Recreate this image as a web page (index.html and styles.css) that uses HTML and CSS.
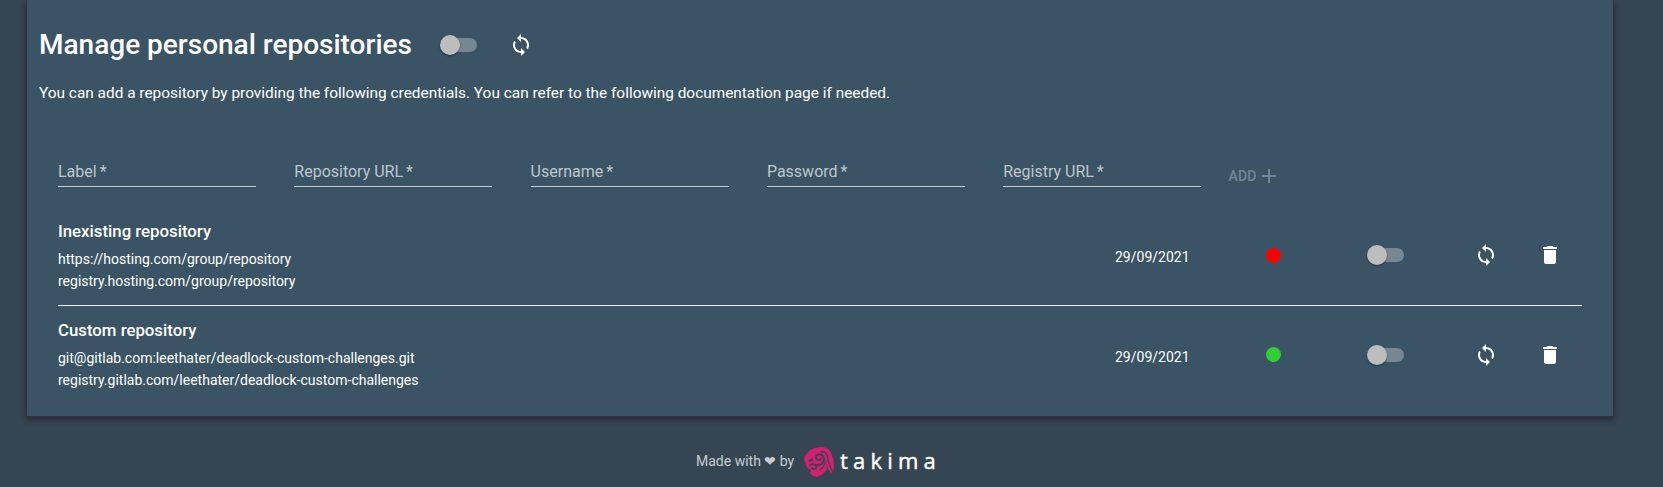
FILE: index.html
```html
<!DOCTYPE html>
<html lang="en">
<head>
<meta charset="utf-8">
<title>Manage personal repositories</title>
<link rel="stylesheet" href="styles.css">
</head>
<body>
<svg class="defs" width="0" height="0">
  <symbol id="sync" viewBox="0 0 24 24"><path d="M12 4V1L8 5l4 4V6c3.31 0 6 2.69 6 6 0 1.01-.25 1.97-.7 2.8l1.46 1.46C19.54 15.03 20 13.57 20 12c0-4.42-3.58-8-8-8zm0 14c-3.31 0-6-2.69-6-6 0-1.01.25-1.97.7-2.8L5.24 7.74C4.46 8.97 4 10.43 4 12c0 4.42 3.58 8 8 8v3l4-4-4-4v3z"/></symbol>
  <symbol id="trash" viewBox="0 0 24 24"><path d="M6 19c0 1.100.9 2 2 2h8c1.100 0 2-.9 2-2V7H6v12zM19 4h-3.500l-1-1h-5l-1 1H5v2h14V4z"/></symbol>
  <symbol id="plus" viewBox="0 0 24 24"><path d="M19 13h-6v6h-2v-6H5v-2h6V5h2v6h6v2z"/></symbol>
</svg>
<main class="card">
  <header class="heading">
    <h1 class="title">Manage personal repositories</h1>
    <span class="toggle"></span>
    <svg class="icon"><use href="#sync"/></svg>
  </header>
  <p class="intro">You can add a repository by providing the following credentials. You can refer to the following documentation page if needed.</p>
  <form class="form">
    <label class="field">Label<span class="star">*</span></label>
    <label class="field">Repository URL<span class="star">*</span></label>
    <label class="field">Username<span class="star">*</span></label>
    <label class="field">Password<span class="star">*</span></label>
    <label class="field">Registry URL<span class="star">*</span></label>
    <div class="add"><span class="add-text">ADD</span><svg class="add-icon"><use href="#plus"/></svg></div>
  </form>
  <section class="list">
    <article class="row">
      <div class="info">
        <h2 class="name">Inexisting repository</h2>
        <div class="url">https://hosting.com/group/repository</div>
        <div class="url">registry.hosting.com/group/repository</div>
      </div>
      <time class="date">29/09/2021</time>
      <span class="dot dot-red"></span>
      <span class="toggle"></span>
      <svg class="icon"><use href="#sync"/></svg>
      <svg class="icon"><use href="#trash"/></svg>
    </article>
    <article class="row">
      <div class="info">
        <h2 class="name">Custom repository</h2>
        <div class="url">git@gitlab.com:leethater/deadlock-custom-challenges.git</div>
        <div class="url">registry.gitlab.com/leethater/deadlock-custom-challenges</div>
      </div>
      <time class="date">29/09/2021</time>
      <span class="dot dot-green"></span>
      <span class="toggle"></span>
      <svg class="icon"><use href="#sync"/></svg>
      <svg class="icon"><use href="#trash"/></svg>
    </article>
  </section>
</main>
<footer class="footer">
  <span class="made">Made with ❤ by</span>
  <svg class="logo" viewBox="0 0 30 30">
    <path fill="#d61f72" d="M1 9C5 3 10 0 17 0c5 0 8 2 10 6 2 4 3 9 3 15l-2 5c-2-1-3-3-4-4l-2 1c-1 3-5 5-9 7-3-1-6-2-7-4l1-3c-2-1-4-2-5-5C0 15 0 11 1 9z"/>
    <path fill="#364652" d="M9 8l-1 4 2 2-5 1-1-2 3-1z"/>
    <g fill="none" stroke="#364652" stroke-linecap="round">
      <path stroke-width="1.300" d="M17 4.500c5 0 7 4 7 9 1 4 2 6 4 10"/>
      <path stroke-width="1.800" d="M12 9c2-3 7-2 8 2 0 4-2 7-6 7M12 9c-1 4 4 6 5 2"/>
      <path stroke-width="1.800" d="M6 18c4-2 8 0 6 3-1 2-4 1-4 0"/>
      <path stroke-width="1.300" d="M16 23c3-2 5-5 5-9M23 20c0 2 1 4 2 5"/>
    </g>
  </svg>
  <span class="brand">takima</span>
</footer>
</body>
</html>
```

FILE: styles.css
```css
* { box-sizing: border-box; }
body {
  margin: 0;
  height: 487px;
  overflow: hidden;
  background: #364552;
  color: #fff;
  font-family: Roboto, sans-serif;
}
.defs { display: block; height: 0; }
.card {
  width: 1588px;
  height: 417px;
  margin-left: 26px;
  padding: 25px 31px 0;
  background: #3a5466;
  border: 1px solid #333;
  border-top: 0;
  box-shadow: 0 3px 5px rgba(0, 0, 0, .25), 0 1px 8px rgba(0, 0, 0, .15);
}
.heading { display: flex; align-items: center; height: 40px; margin-left: -19px; }
.title { margin: 0; width: 402px; font-size: 28px; font-weight: 500; line-height: 40px; white-space: nowrap; }
.icon { width: 24px; height: 24px; fill: #fff; flex: none; }
.heading .icon { margin-left: 32px; }
.toggle {
  position: relative;
  display: block;
  flex: none;
  width: 36px;
  height: 14px;
  border-radius: 7px;
  background: #758792;
}
.toggle::before {
  content: "";
  position: absolute;
  left: -1px;
  top: -3px;
  width: 20px;
  height: 20px;
  border-radius: 50%;
  background: #bdbdbd;
  box-shadow: 0 1px 2px rgba(0, 0, 0, .4);
}
.intro { margin: 18px 0 0 -19px; font-size: 15.400px; line-height: 20px; white-space: nowrap; }
.form { display: flex; gap: 38.300px; margin-top: 53px; height: 31px; }
.field {
  width: 198px;
  height: 31px;
  border-bottom: 1px solid #c4ccd1;
  color: #bdc6cc;
  font-size: 16px;
  line-height: 32px;
  white-space: nowrap;
}
.star { margin-left: 3px; }
.add { display: flex; align-items: center; height: 40px; margin-left: -11px; color: #758792; }
.add-text { font-size: 14px; font-weight: 500; letter-spacing: .2px; }
.add-icon { width: 24px; height: 24px; fill: #758792; }
.list { width: 1524px; }
.row {
  display: grid;
  grid-template-columns: 1057px 151px 102px 106px 64px 24px;
  height: 99px;
}
.row:first-child { height: 119px; padding-top: 20px; border-bottom: 1px solid #edf0f2; }
.row > .info { margin-top: 14px; }
.row > .toggle { margin-top: 42px; }
.row > .icon { margin-top: 37px; }
.row > .dot, .row:first-child > .toggle { margin-top: 41px; }
.row:first-child > .icon { margin-top: 36px; }
.name { margin: 0 0 7px; font-size: 16.800px; font-weight: 500; line-height: 20px; }
.url { font-size: 14px; line-height: 22px; }
.date { font-size: 14px; line-height: 20px; margin-top: 41px; }
.row:first-child .date { margin-top: 40px; }
.dot { width: 15px; height: 15px; border-radius: 50%; }
.dot-red { background: #f00; }
.dot-green { background: #32cd32; }
.footer { display: flex; align-items: center; height: 44px; margin: 23px 0 0 696px; }
.made { width: 108px; color: #c8cccf; font-size: 14px; line-height: 18px; padding-bottom: 2px; white-space: nowrap; }
.logo { width: 30px; height: 30px; }
.brand { margin-left: 6px; padding-bottom: 4px; font-family: "Open Sans", sans-serif; font-size: 22px; font-weight: 500; line-height: 30px; letter-spacing: 5.200px; -webkit-text-stroke: .4px #fff; }
```
